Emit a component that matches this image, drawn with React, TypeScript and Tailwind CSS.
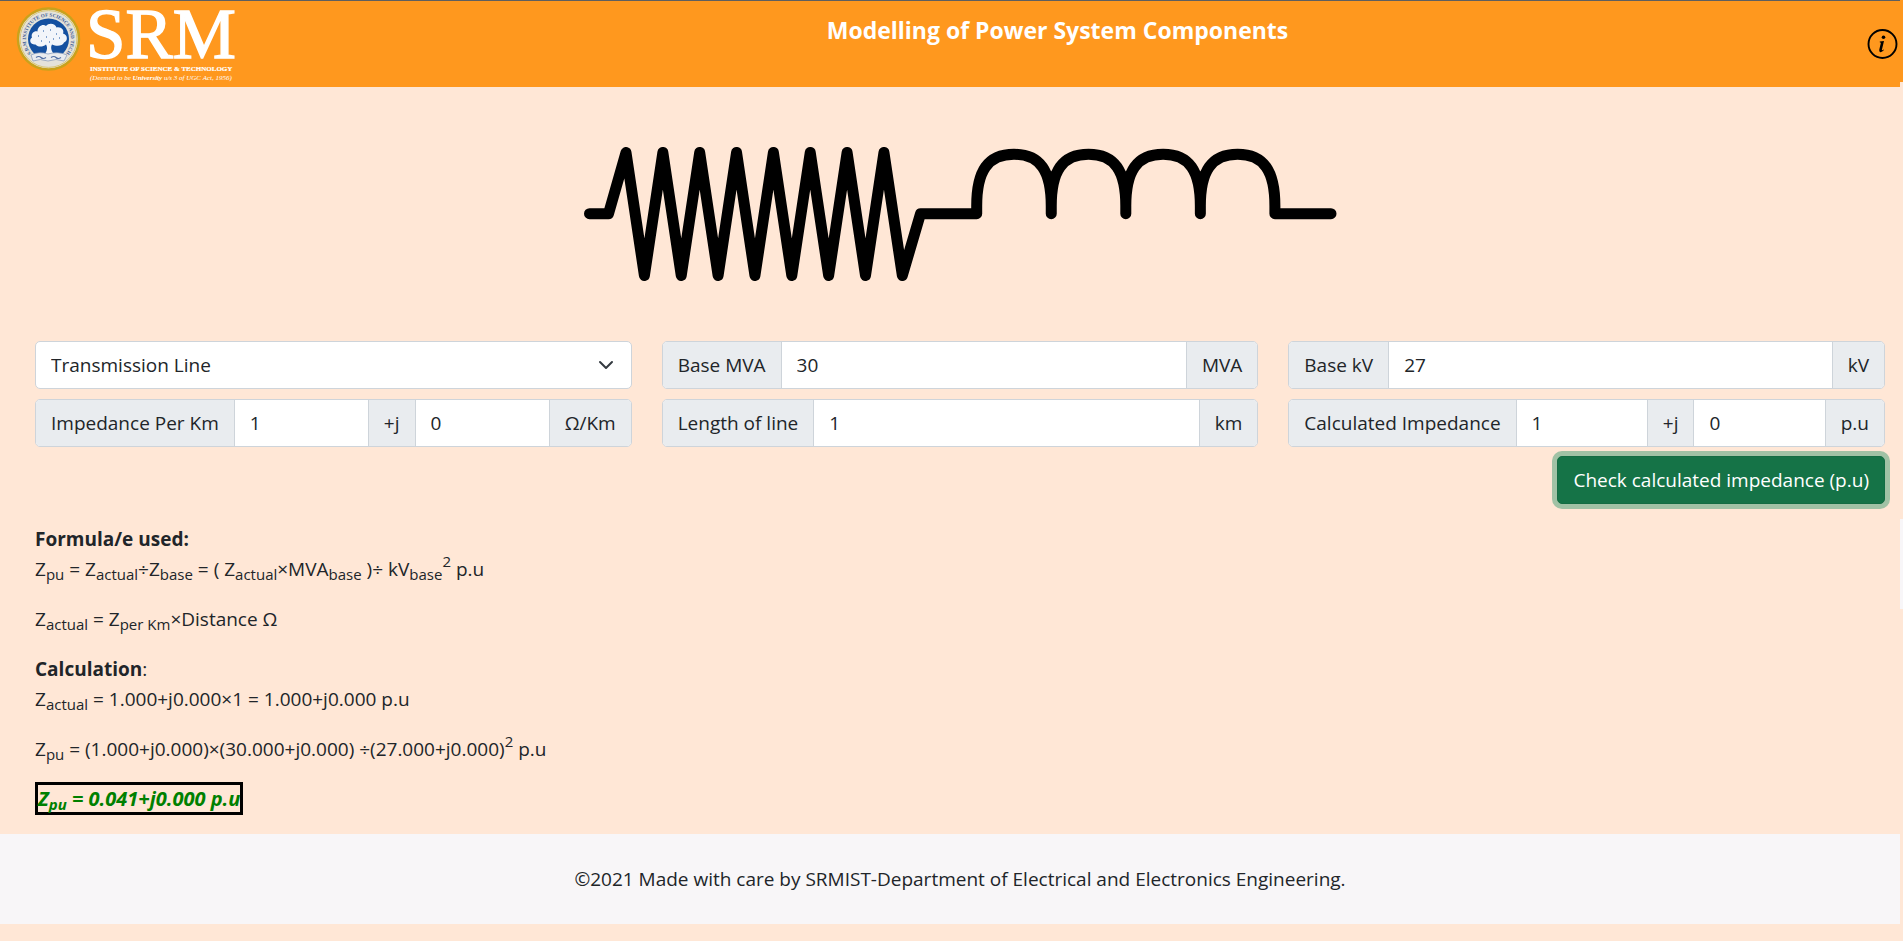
import { useState } from "react";
import type { ReactNode } from "react";

const TEETH = [0, 1, 2, 3, 4, 5, 6, 7];
const PERIOD = 36.85;

const resistor = TEETH.map(
  (i) => `L${626 + i * PERIOD} 152.5 L${644.4 + i * PERIOD} 275.5`
).join(" ");

const coil = [0, 1, 2, 3]
  .map((i) => {
    const a = 976.7 + i * 74.55;
    const m = a + 37.3;
    const b = a + 74.55;
    return `L${a} 206 C${a} 171 ${a + 11} 154.3 ${m} 154.3 C${b - 11} 154.3 ${b} 171 ${b} 206 L${b} 213.7`;
  })
  .join(" ");

function LineModel() {
  return (
    <svg viewBox="584 147 753 134" className="h-[134px] w-[753px] max-w-full" role="img" aria-label="Series resistor and inductor">
      <path
        d={`M589.5 213.7 L608.5 213.7 ${resistor} L920.5 213.7 L976.7 213.7 ${coil} L1331 213.7`}
        fill="none"
        stroke="#000"
        strokeWidth="11"
        strokeLinecap="round"
        strokeLinejoin="round"
      />
    </svg>
  );
}

function Logo() {
  return (
    <svg viewBox="0 0 247 86" className="h-[86px] w-[247px] shrink-0" role="img" aria-label="SRM Institute of Science and Technology">
      <defs>
        <path id="ring" d="M31.2 52.5 A22.5 22.5 0 1 1 65.8 52.5" />
      </defs>
      <circle cx="48.5" cy="38" r="30.5" fill="#e4e2da" stroke="#c9a21c" strokeWidth="2.5" />
      <circle cx="48.5" cy="38" r="28.4" fill="none" stroke="#d9c774" strokeWidth="1" />
      <circle cx="48.5" cy="38" r="20.5" fill="#1450a0" />
      <text fill="#3d5c96" fontSize="5" fontWeight="700" fontFamily="Liberation Serif, serif">
        <textPath href="#ring">S.R.M INSTITUTE OF SCIENCE AND TECH</textPath>
      </text>
      <path
        d="M45 53 C47.5 49 47.5 46 46 43.5 C42 47 37 45.5 35.5 43.5 C30.5 44 28.5 39 32 36.5 C30.5 32.5 34.5 29.5 37.5 30.5 C37.5 25.5 43 22.5 46 25 C49 21 55.5 22.5 56.5 26.5 C61.5 25.5 64.5 29.5 63 32.5 C68 34 68 40 64 41.5 C62.5 45.5 56 45.5 52 43.5 C50.5 46 51 50 54 53 Z"
        fill="#f2f5fa"
      />
      <path d="M38 35h1M43 30h1M50 29h1M56 33h1M46 36h1M53 38h1M59 37h1M41 40h1M49 41h1" stroke="#1450a0" strokeWidth="1" />
      <path d="M31 54 Q39 50 48 53 Q58 50 67 54 L64 60 Q56 57 48 60 Q40 57 33 60 Z" fill="#e9ebee" stroke="#8195b8" strokeWidth="0.7" />
      <path d="M36 56.5 q3-2 5 0 t5 0 M51 56.5 q3-2 5 0 t5 0" fill="none" stroke="#4f6da3" strokeWidth="1.2" />
      <g fill="#fff" fontFamily="Liberation Serif, serif">
        <text x="86" y="57" fontSize="71" stroke="#fff" strokeWidth="1.4">SRM</text>
        <text x="90" y="70" fontSize="7" fontWeight="700" stroke="#fff" strokeWidth="0.2">INSTITUTE OF SCIENCE &amp; TECHNOLOGY</text>
        <text x="90" y="79" fontSize="7" fontStyle="italic">
          (Deemed to be <tspan fontWeight="700">University</tspan> u/s 3 of UGC Act, 1956)
        </text>
      </g>
    </svg>
  );
}

const addon = "flex shrink-0 items-center border-[#ced4da] bg-[#e9ecef] px-[15px]";

function Group({ children }: { children: ReactNode }) {
  return (
    <div className="flex h-12 overflow-hidden rounded-[5px] border border-[#ced4da] bg-white">
      {children}
    </div>
  );
}

function Field({ id, value, label }: { id: string; value: string; label?: string }) {
  const [text, setText] = useState(value);
  return (
    <input
      id={id}
      aria-label={label}
      value={text}
      onChange={(e) => setText(e.target.value)}
      className="w-0 min-w-0 flex-1 bg-white px-[15px] outline-none"
    />
  );
}

function Sub({ children }: { children: ReactNode }) {
  return <sub className="bottom-[-4px] text-[15px]">{children}</sub>;
}

function Sup({ children }: { children: ReactNode }) {
  return <sup className="top-[-9px] text-[15px]">{children}</sup>;
}

export default function App() {
  return (
    <div className="flex min-h-screen bg-[#ffe7d6] font-['Open_Sans','Noto_Sans',sans-serif] text-[19px] leading-[30px] text-[#212529]">
      <div className="min-w-0 flex-1">
        <header className="flex border-t border-[#5f5f5f] bg-[#ff981e]">
          <Logo />
          <h1 className="flex-1 pt-[14px] text-center text-[23px] font-bold text-white">
            Modelling of Power System Components
          </h1>
          <button type="button" aria-label="Information" className="w-8 shrink-0">
            <svg viewBox="0 0 32 32" className="size-8 overflow-visible">
              <circle cx="14.5" cy="16" r="14" fill="none" stroke="#000" strokeWidth="1.9" />
              <circle cx="15.5" cy="9.3" r="1.8" />
              <path d="M11.8 13.6 L16 13 L13.9 21.8 Q13.8 23 15.7 21.6 L16 22.1 Q14 24.4 12.3 24.2 Q10.8 23.8 11.3 21.6 L12.8 15.2 Q12.9 14.4 11.7 14.3 Z" />
            </svg>
          </button>
        </header>

        <main className="pr-[15px] pl-[35px]">
          <div className="flex justify-center py-[60px]">
            <LineModel />
          </div>

          <form onSubmit={(e) => e.preventDefault()}>
            <div className="grid grid-cols-3 gap-x-[30px] gap-y-[10px]">
              <div className="relative">
                <select
                  aria-label="Component"
                  className="h-12 w-full appearance-none rounded-[5px] border border-[#ced4da] bg-white px-[15px] outline-none"
                >
                  <option>Transmission Line</option>
                </select>
                <svg viewBox="0 0 16 16" className="pointer-events-none absolute top-4 right-[18px] size-4">
                  <path d="m2 5 6 6 6-6" fill="none" stroke="#343a40" strokeWidth="2" strokeLinecap="round" strokeLinejoin="round" />
                </svg>
              </div>
              <Group>
                <label htmlFor="mva" className={`${addon} border-r`}>Base MVA</label>
                <Field id="mva" value="30" />
                <span className={`${addon} border-l`}>MVA</span>
              </Group>
              <Group>
                <label htmlFor="kv" className={`${addon} border-r`}>Base kV</label>
                <Field id="kv" value="27" />
                <span className={`${addon} border-l`}>kV</span>
              </Group>
              <Group>
                <label htmlFor="per-km" className={`${addon} border-r`}>Impedance Per Km</label>
                <Field id="per-km" value="1" />
                <span className={`${addon} border-x`}>+j</span>
                <Field id="per-km-j" value="0" label="Impedance per km, imaginary part" />
                <span className={`${addon} border-l`}>Ω/Km</span>
              </Group>
              <Group>
                <label htmlFor="length" className={`${addon} border-r`}>Length of line</label>
                <Field id="length" value="1" />
                <span className={`${addon} border-l`}>km</span>
              </Group>
              <Group>
                <label htmlFor="result" className={`${addon} border-r`}>Calculated Impedance</label>
                <Field id="result" value="1" />
                <span className={`${addon} border-x`}>+j</span>
                <Field id="result-j" value="0" label="Calculated impedance, imaginary part" />
                <span className={`${addon} border-l`}>p.u</span>
              </Group>
            </div>
            <div className="mt-[9px] flex justify-end">
              <button
                type="submit"
                className="h-12 rounded-[5px] border border-[#146c43] bg-[#157347] px-[15px] text-white ring-[5px] ring-[#a0c2a5]"
              >
                Check calculated impedance (p.u)
              </button>
            </div>
          </form>

          <section className="mt-5 mb-5">
            <h2 className="font-bold">Formula/e used:</h2>
            <p className="mb-5">
              Z<Sub>pu</Sub> = Z<Sub>actual</Sub>÷Z<Sub>base</Sub> = ( Z<Sub>actual</Sub>×MVA<Sub>base</Sub> )÷ kV
              <Sub>base</Sub>
              <Sup>2</Sup> p.u
            </p>
            <p className="mb-5">
              Z<Sub>actual</Sub> = Z<Sub>per Km</Sub>×Distance Ω
            </p>
            <h2>
              <b className="font-bold">Calculation</b>:
            </h2>
            <p className="mb-5">
              Z<Sub>actual</Sub> = 1.000+j0.000×1 = 1.000+j0.000 p.u
            </p>
            <p className="mb-5">
              Z<Sub>pu</Sub> = (1.000+j0.000)×(30.000+j0.000) ÷(27.000+j0.000)<Sup>2</Sup> p.u
            </p>
            <p className="text-[20px]">
              <b className="border-[3px] border-black font-bold text-[#008000] italic">
                Z<Sub>pu</Sub> = 0.041+j0.000 p.u
              </b>
            </p>
          </section>
        </main>

        <footer className="bg-[#f8f6f8] py-[30px] pl-5 text-center">
          ©2021 Made with care by SRMIST-Department of Electrical and Electronics Engineering.
        </footer>
      </div>
      <div aria-hidden="true" className="w-[3px] shrink-0">
        <div className="h-[82px] bg-[#ff981e]" />
        <div className="mt-[437px] h-[90px] bg-[#f8f6f8]" />
      </div>
    </div>
  );
}
